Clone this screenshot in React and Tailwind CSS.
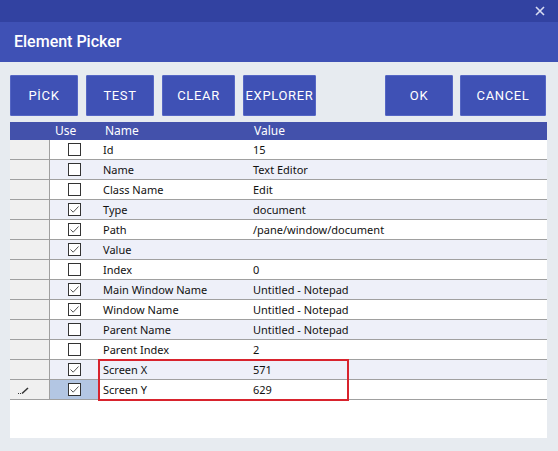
import React from "react";

const rows = [
  { name: "Id", value: "15", use: false },
  { name: "Name", value: "Text Editor", use: false },
  { name: "Class Name", value: "Edit", use: false },
  { name: "Type", value: "document", use: true },
  { name: "Path", value: "/pane/window/document", use: true },
  { name: "Value", value: "", use: true },
  { name: "Index", value: "0", use: false },
  { name: "Main Window Name", value: "Untitled - Notepad", use: true },
  { name: "Window Name", value: "Untitled - Notepad", use: true },
  { name: "Parent Name", value: "Untitled - Notepad", use: false },
  { name: "Parent Index", value: "2", use: false },
  { name: "Screen X", value: "571", use: true },
  { name: "Screen Y", value: "629", use: true },
];

const CheckBox = ({ checked }) => (
  <div className="w-[13px] h-[13px] border border-[#333333] bg-white flex items-center justify-center">
    {checked && (
      <svg width="11" height="11" viewBox="0 0 11 11">
        <path d="M1.5 5.5 L4.2 8.2 L9.5 2.5" fill="none" stroke="#555555" strokeWidth="1" />
      </svg>
    )}
  </div>
);

const Btn = ({ label, w }) => (
  <button
    className={`${w} h-[41px] bg-[#3f51b5] text-white text-[13px] font-normal tracking-[0.05em] rounded-[1px] border border-[#5566c4]`}
  >
    {label}
  </button>
);

export default function App() {
  return (
    <div className="w-[558px] h-[451px] bg-[#e7ebf0] flex flex-col font-['Roboto',sans-serif]">
      {/* Title bar */}
      <div className="h-[22px] bg-[#3242a1] flex items-center justify-end pr-[13px]">
        <svg width="10" height="10" viewBox="0 0 10 10">
          <path d="M1 1 L9 9 M9 1 L1 9" stroke="#d8dcf2" strokeWidth="1.6" />
        </svg>
      </div>

      {/* Header */}
      <div className="h-[40px] bg-[#3f51b5] flex items-center px-[14px]">
        <span className="text-white text-[16px] font-medium">Element Picker</span>
      </div>

      {/* Buttons */}
      <div className="mt-[13px] px-[10px] flex">
        <div className="flex gap-[8px]">
          <Btn label="PİCK" w="w-[68px]" />
          <Btn label="TEST" w="w-[68px]" />
          <Btn label="CLEAR" w="w-[73px]" />
          <Btn label="EXPLORER" w="w-[73px]" />
        </div>
        <div className="ml-auto mr-[2px] flex gap-[7px]">
          <Btn label="OK" w="w-[68px]" />
          <Btn label="CANCEL" w="w-[86px]" />
        </div>
      </div>

      {/* Grid */}
      <div className="relative mt-[6px] ml-[10px] w-[537px] h-[316px] bg-white font-['Noto_Sans',sans-serif] text-[11px] text-[#111111]">
        <div className="h-[18px] bg-[#4351ab] flex items-center text-white text-[12px]">
          <div className="w-[40px]" />
          <div className="w-[48px] pl-[5px]">Use</div>
          <div className="w-[152px] pl-[7px]">Name</div>
          <div className="pl-[4px]">Value</div>
        </div>
        {rows.map((r, i) => {
          const last = i === rows.length - 1;
          return (
            <div
              key={r.name}
              className={`h-[20px] flex border-b border-[#a0a0a0] ${i % 2 === 1 ? "bg-[#eef0f9]" : "bg-white"}`}
            >
              <div className="w-[40px] bg-[#f0f0f0] border-r border-[#a0a0a0] flex items-center pl-[7px]">
                {last && (
                  <svg width="14" height="10" viewBox="0 0 14 10">
                    <rect x="1" y="8" width="1" height="1" fill="#333" />
                    <rect x="3" y="8" width="1" height="1" fill="#333" />
                    <path d="M5 8.5 L11 3" stroke="#333" strokeWidth="1.5" />
                  </svg>
                )}
              </div>
              <div className={`w-[48px] flex items-center justify-center ${last ? "bg-[#b3c6e3]" : ""}`}>
                <CheckBox checked={r.use} />
              </div>
              <div className="w-[152px] pl-[5px] pt-[2px] flex items-center">{r.name}</div>
              <div className="pl-[3px] pt-[2px] flex items-center">{r.value}</div>
            </div>
          );
        })}
        {/* highlight box */}
        <div className="absolute left-[88px] top-[237px] w-[251px] h-[42px] border-2 border-[#d8232d]" />
      </div>
    </div>
  );
}
